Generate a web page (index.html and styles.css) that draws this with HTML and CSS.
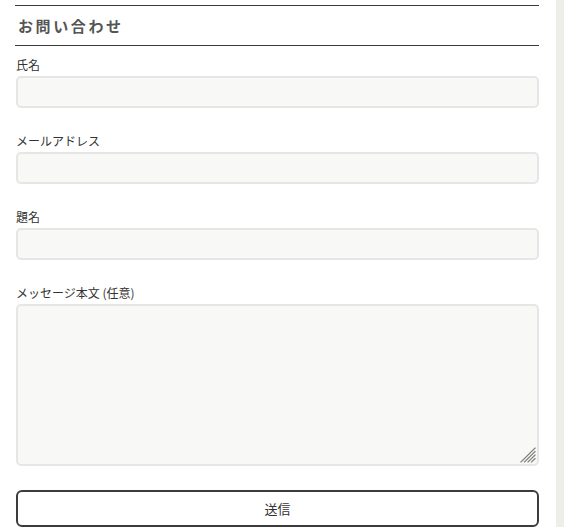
FILE: index.html
```html
<!DOCTYPE html>
<html lang="ja">
<head>
<meta charset="utf-8">
<link rel="stylesheet" href="styles.css">
</head>
<body>
<div class="page">
  <main class="main">
    <h2 class="title">お問い合わせ</h2>
    <form class="form">
      <label class="field">
        <span class="label">氏名</span>
        <input class="input" type="text">
      </label>
      <label class="field">
        <span class="label">メールアドレス</span>
        <input class="input" type="email">
      </label>
      <label class="field">
        <span class="label">題名</span>
        <input class="input" type="text">
      </label>
      <label class="field">
        <span class="label">メッセージ本文 (任意)</span>
        <span class="area-wrap">
          <textarea class="textarea"></textarea>
          <svg class="grip" width="16" height="16" viewBox="0 0 16 16" aria-hidden="true">
            <g stroke="#7a7a7a" stroke-width="1.2" stroke-linecap="square">
              <line x1="15" y1="1" x2="1" y2="15"/>
              <line x1="15" y1="4.5" x2="4.5" y2="15"/>
              <line x1="15" y1="8" x2="8" y2="15"/>
              <line x1="15" y1="11.5" x2="11.5" y2="15"/>
            </g>
          </svg>
        </span>
      </label>
      <button class="submit" type="button">送信</button>
    </form>
  </main>
  <aside class="side"></aside>
</div>
</body>
</html>
```

FILE: styles.css
```css
html, body {
  margin: 0;
  padding: 0;
  background: #ffffff;
}
body {
  font-family: "Noto Sans CJK JP", "Noto Sans", sans-serif;
  color: #333333;
}
.page {
  display: flex;
  min-height: 527px;
}
.main {
  flex: 1;
  padding: 5px 17px 0 15px;
}
.side {
  width: 8px;
  background: #eeede8;
}
.title {
  margin: 0;
  border-top: 1px solid #3a3a3a;
  border-bottom: 1px solid #3a3a3a;
  height: 39px;
  line-height: 39px;
  font-size: 15px;
  font-weight: bold;
  letter-spacing: 2.6px;
  color: #555555;
  padding-left: 3px;
}
.form {
  display: flex;
  flex-direction: column;
  padding-left: 1px;
  padding-top: 10px;
}
.field {
  display: flex;
  flex-direction: column;
  margin-bottom: 24px;
}
.label {
  font-size: 12px;
  line-height: 18px;
  margin-bottom: 2px;
  color: #333333;
}
.input, .textarea {
  box-sizing: border-box;
  width: 100%;
  height: 32px;
  border: 2px solid #e6e6e4;
  border-radius: 5px;
  background: #f8f8f6;
  margin: 0;
  font: inherit;
  outline: none;
}
.area-wrap {
  position: relative;
  display: block;
}
.textarea {
  height: 162px;
  display: block;
  resize: none;
}
.grip {
  position: absolute;
  right: 3px;
  bottom: 3px;
}
.submit {
  box-sizing: border-box;
  height: 37px;
  width: 100%;
  border: 2px solid #3c3c3c;
  border-radius: 6px;
  background: #ffffff;
  font-family: "Noto Sans CJK JP", sans-serif;
  font-size: 13px;
  color: #333333;
  margin: 0;
}
```
